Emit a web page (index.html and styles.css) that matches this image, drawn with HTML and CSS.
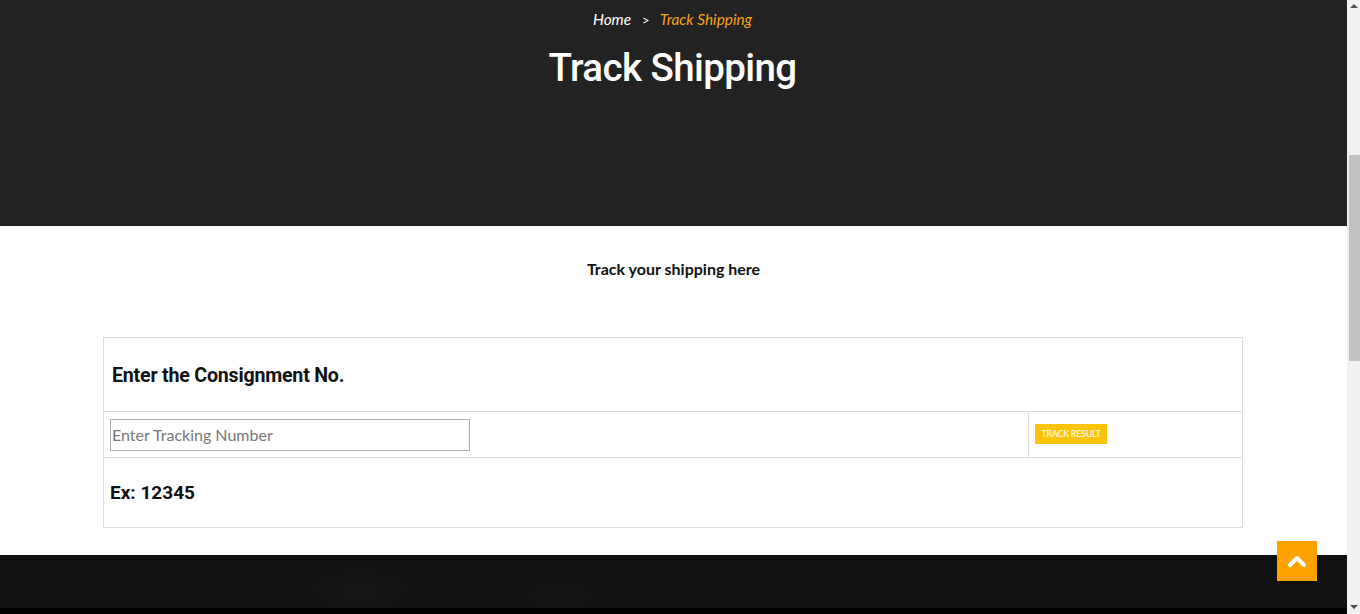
FILE: index.html
```html
<!DOCTYPE html>
<html>
<head>
<meta charset="utf-8">
<link rel="stylesheet" href="styles.css">
</head>
<body>
<div class="frame">
  <div class="page">
    <header class="banner">
      <nav class="crumbs"><span class="home">Home</span><span class="sep">&gt;</span><span class="current">Track Shipping</span></nav>
      <h1 class="title">Track Shipping</h1>
    </header>
    <main class="content">
      <p class="lead">Track your shipping here</p>
      <table class="track">
        <tr><td colspan="2" class="head-cell"><h2>Enter the Consignment No.</h2></td></tr>
        <tr>
          <td class="input-cell"><input class="field" type="text" placeholder="Enter Tracking Number"></td>
          <td class="btn-cell"><button class="btn">TRACK RESULT</button></td>
        </tr>
        <tr><td colspan="2" class="ex-cell"><h3>Ex: 12345</h3></td></tr>
      </table>
    </main>
    <footer class="footer">
      <div class="footer-main"></div>
      <div class="footer-bottom"></div>
    </footer>
    <a class="to-top" href="#"><svg width="20" height="14" viewBox="0 0 20 14"><path d="M3 11 L10 4 L17 11" fill="none" stroke="#fff" stroke-width="4" stroke-linecap="round" stroke-linejoin="round"/></svg></a>
  </div>
  <div class="scrollbar">
    <div class="arrow up"></div>
    <div class="track-area"><div class="thumb"></div></div>
    <div class="arrow down"></div>
  </div>
</div>
</body>
</html>
```
FILE: styles.css
```css
* { box-sizing: border-box; }
html, body { margin: 0; padding: 0; height: 614px; overflow: hidden; }
body { font-family: "Lato", "Liberation Sans", sans-serif; background: #fff; }
.frame { display: flex; width: 1360px; height: 614px; }
.page { width: 1347px; flex-shrink: 0; height: 614px; position: relative; display: flex; flex-direction: column; }
.banner { flex-shrink: 0; background: #222222; height: 226px; text-align: center; padding-top: 10px; padding-right: 2px; }
.crumbs { font-family: "Lato", sans-serif; font-style: italic; font-size: 15.4px; line-height: 19px; color: #fff; }
.crumbs .sep { font-style: normal; margin: 0 10px 0 11px; font-size: 13px; }
.crumbs .current { color: #f7a21b; }
.title { margin: 18px 0 0; font-family: "Roboto", sans-serif; font-weight: 500; font-size: 38.5px; line-height: 40px; color: #fff; letter-spacing: -0.6px; }
.content { flex-shrink: 0; padding-top: 34px; }
.lead { margin: 0; text-align: center; font-weight: 700; font-size: 16px; line-height: 18px; color: #111; }
.track { margin: 59px 0 0 103px; width: 1140px; border-collapse: collapse; }
.track td { border: 1px solid #dcdcdc; padding: 0; }
.head-cell { height: 74px; padding: 0 8px !important; }
.head-cell h2 { margin: 1px 0 0; font-family: "Roboto", sans-serif; font-weight: 700; font-size: 19.6px; color: #111; letter-spacing: -0.2px; }
.input-cell { height: 46px; padding: 0 6px !important; width: 925px; }
.field { display: block; width: 360px; height: 32px; border: 1px solid #a9a9a9; font-family: "Lato", sans-serif; font-size: 16px; padding: 0 1px; color: #333; outline: none; }
.field::placeholder { color: #777; }
.btn-cell { padding: 0 6px !important; }
.btn { display: block; background: #fcc30b; color: #fff; border: 0; font-family: "Lato", sans-serif; font-size: 9px; height: 20px; width: 72px; padding: 0; letter-spacing: -0.3px; margin-top: -2px; }
.ex-cell { height: 70px; padding: 0 6px !important; }
.ex-cell h3 { margin: 0; font-family: "Roboto", sans-serif; font-weight: 700; font-size: 19px; color: #111; }
.footer { flex-shrink: 0; margin-top: 27px; height: 59px; display: flex; flex-direction: column; }
.footer-main { flex: 1; background: radial-gradient(ellipse 70px 30px at 360px 35px, #171717, rgba(17,17,17,0)), radial-gradient(ellipse 60px 30px at 560px 40px, #151515, rgba(17,17,17,0)), #111111; }
.footer-bottom { height: 6px; background: #000; }
.to-top { position: absolute; left: 1277px; top: 541px; width: 40px; height: 40px; background: #ffa200; display: flex; align-items: center; justify-content: center; }
.scrollbar { width: 13px; height: 614px; background: #f1f1f1; display: flex; flex-direction: column; }
.arrow { height: 14px; position: relative; flex-shrink: 0; }
.arrow.up::after { content: ""; position: absolute; left: 3px; top: 4px; border-left: 4px solid transparent; border-right: 4px solid transparent; border-bottom: 4px solid #505050; }
.arrow.down::after { content: ""; position: absolute; left: 3px; top: 5px; border-left: 4px solid transparent; border-right: 4px solid transparent; border-top: 4px solid #505050; }
.track-area { flex: 1; padding: 141px 0 0 2px; }
.thumb { height: 206px; background: #c1c1c1; }
```
